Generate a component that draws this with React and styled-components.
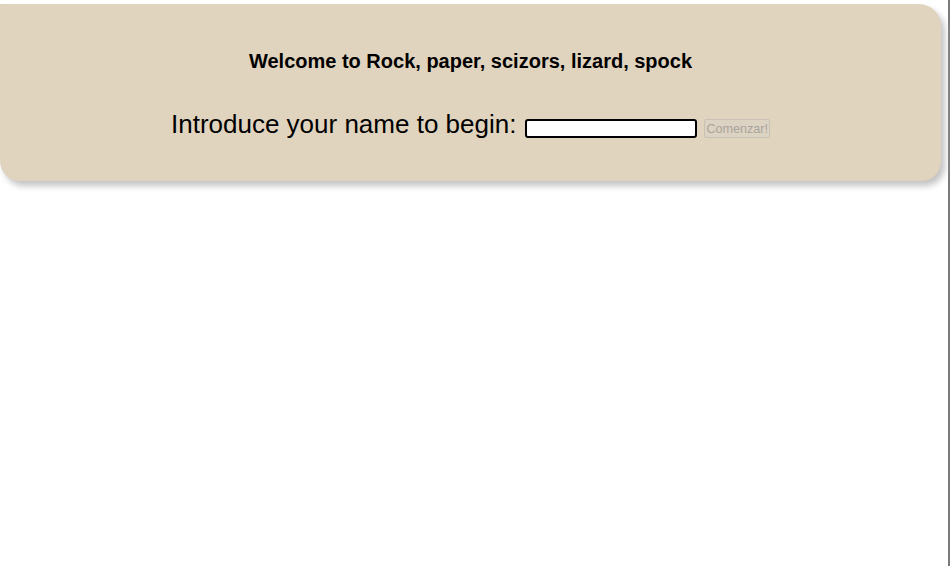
import React from 'react';
import styled, { createGlobalStyle } from 'styled-components';

const GlobalStyle = createGlobalStyle`
  body {
    margin: 0;
    font-family: "Liberation Sans", Arial, sans-serif;
    background: #fff;
  }
`

const Page = styled.div`
  width: 950px;
  height: 566px;
  box-sizing: border-box;
  border-right: 2px solid #7a7a7a;
  padding-top: 4px;
`

const Card = styled.div`
  width: 941px;
  height: 177px;
  box-sizing: border-box;
  background: #e0d4be;
  border-radius: 0 22px 20px 20px;
  box-shadow: 4px 5px 6px #c4c4c4;
  padding-top: 46px;
  display: flex;
  flex-direction: column;
  align-items: center;
`

const Title = styled.h3`
  margin: 0;
  font-size: 20px;
  font-weight: bold;
  color: #000;
`

const Row = styled.div`
  margin-top: 36px;
  display: flex;
  align-items: center;
  font-size: 26px;
  color: #000;
`

const NameInput = styled.input`
  margin-left: 9px;
  width: 172px;
  height: 19px;
  box-sizing: border-box;
  border: 2px solid #000;
  border-radius: 3px;
  background: #fff;
  margin-top: 8px;
`

const StartButton = styled.button`
  margin-left: 7px;
  margin-top: 8px;
  height: 19px;
  padding: 0 1px;
  font-family: "Liberation Sans", Arial, sans-serif;
  font-size: 12.6px;
  color: #a9a49b;
  background: #ddd3c3;
  border: 1px solid #c9c1b3;
  border-radius: 2px;
`

export default function App() {
  return (
    <>
      <GlobalStyle />
      <Page>
        <Card>
          <Title>Welcome to Rock, paper, scizors, lizard, spock</Title>
          <Row>
            Introduce your name to begin:
            <NameInput type="text" />
            <StartButton disabled>Comenzar!</StartButton>
          </Row>
        </Card>
      </Page>
    </>
  );
}
